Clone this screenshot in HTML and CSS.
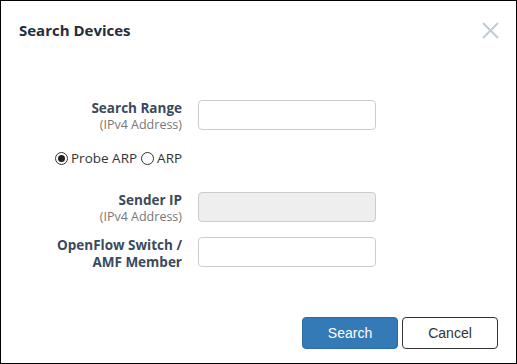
FILE: index.html
```html
<!DOCTYPE html>
<html lang="en">
<head>
  <meta charset="UTF-8">
  <title>Search Devices</title>
  <link rel="stylesheet" href="styles.css">
</head>
<body>
  <div class="modal">
    <div class="modal-header">
      <h1>Search Devices</h1>
      <button class="close" type="button" aria-label="Close">
        <svg width="17" height="17" viewBox="0 0 17 17">
          <path d="M1 1 L16 16 M16 1 L1 16" stroke="#c3cbd6" stroke-width="2" fill="none"/>
        </svg>
      </button>
    </div>
    <form class="modal-body">
      <div class="field">
        <label for="range">
          <span class="name">Search Range</span>
          <span class="hint">(IPv4 Address)</span>
        </label>
        <input type="text" id="range">
      </div>
      <div class="radios">
        <label><input type="radio" name="mode" checked> Probe ARP</label>
        <label><input type="radio" name="mode"> ARP</label>
      </div>
      <div class="field">
        <label for="sender">
          <span class="name">Sender IP</span>
          <span class="hint">(IPv4 Address)</span>
        </label>
        <input type="text" id="sender" disabled>
      </div>
      <div class="field">
        <label for="member">
          <span class="name">OpenFlow Switch /<br>AMF Member</span>
        </label>
        <input type="text" id="member">
      </div>
    </form>
    <div class="modal-footer">
      <button class="btn btn-primary" type="button">Search</button>
      <button class="btn btn-default" type="button">Cancel</button>
    </div>
  </div>
</body>
</html>
```

FILE: styles.css
```css
* {
  box-sizing: border-box;
}
body {
  margin: 0;
  background: #fff;
  font-family: "Open Sans", "Noto Sans", sans-serif;
  color: #333;
}
.modal {
  width: 517px;
  height: 364px;
  border: 1px solid #000;
  display: flex;
  flex-direction: column;
}
.modal-header {
  display: flex;
  justify-content: space-between;
  align-items: flex-start;
  padding: 18px 17px 0 18px;
  height: 60px;
}
h1 {
  margin: 0;
  font-size: 15px;
  line-height: 22px;
  font-weight: 700;
  color: #1f2d3d;
}
.close {
  background: none;
  border: none;
  padding: 0;
  margin-top: 3px;
  cursor: pointer;
}
.modal-body {
  margin: 0;
  padding-top: 39px;
  flex: 1;
}
.field {
  display: flex;
  gap: 16px;
  align-items: flex-start;
  height: 30px;
}
.field label {
  width: 181px;
  text-align: right;
  display: flex;
  flex-direction: column;
}
.name {
  font-size: 13.5px;
  line-height: 17px;
  font-weight: 700;
  color: #3a4a5c;
}
.hint {
  font-size: 12.5px;
  line-height: 16px;
  color: #777;
}
.field input {
  width: 178px;
  height: 30px;
  border: 1px solid #ccc;
  border-radius: 4px;
  background: #fff;
  font-size: 13px;
}
.field input:disabled {
  background: #eee;
}
.field + .field {
  margin-top: 15px;
}
.radios {
  display: flex;
  gap: 4px;
  padding-left: 54px;
  margin: 19px 0 25px;
  font-size: 13.5px;
  line-height: 18px;
  color: #333;
}
.radios label {
  display: flex;
  align-items: center;
}
.radios input {
  appearance: none;
  margin: 0 3px 0 0;
  width: 13px;
  height: 13px;
  border: 1px solid #333;
  border-radius: 50%;
  display: grid;
  place-items: center;
}
.radios input:checked::after {
  content: "";
  width: 7px;
  height: 7px;
  border-radius: 50%;
  background: #222;
}
.modal-footer {
  display: flex;
  justify-content: flex-end;
  gap: 4px;
  padding: 0 18px 14px 0;
}
.btn {
  width: 96px;
  height: 32px;
  border-radius: 4px;
  font-family: "Liberation Sans", Arial, sans-serif;
  font-size: 14px;
  cursor: pointer;
}
.btn-primary {
  background: #337ab7;
  border: 1px solid #2e6da4;
  color: #fff;
}
.btn-default {
  background: #fff;
  border: 1px solid #333;
  color: #333;
}
```
